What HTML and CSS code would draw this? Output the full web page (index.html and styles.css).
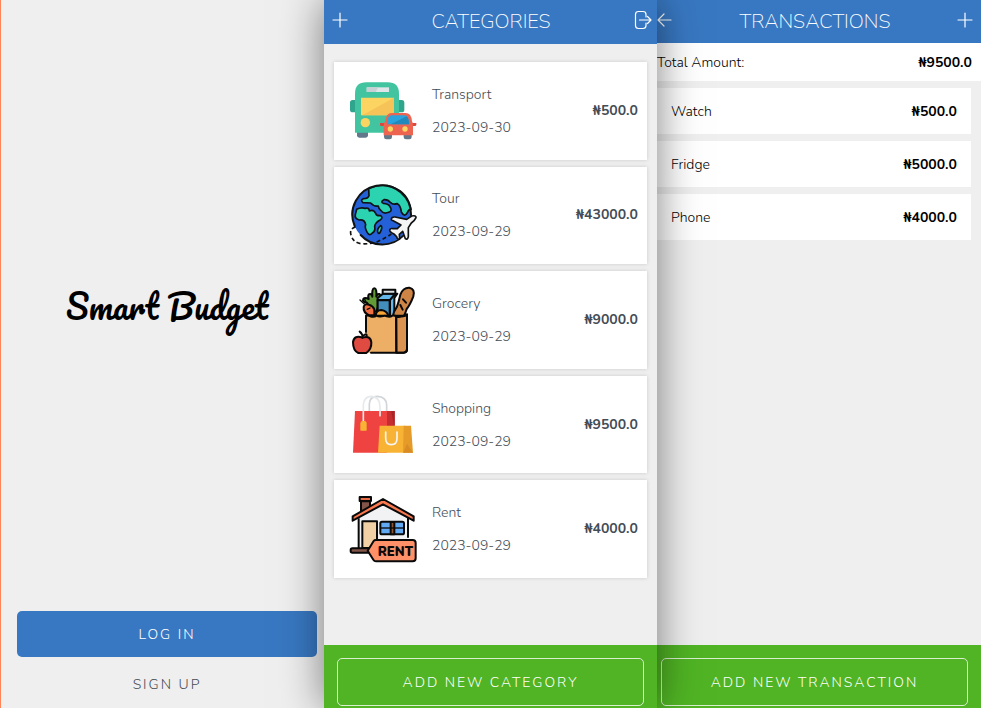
FILE: index.html
```html
<!DOCTYPE html>
<html lang="en">
<head>
<meta charset="utf-8">
<meta name="viewport" content="width=device-width, initial-scale=1">
<title>Smart Budget</title>
<link rel="stylesheet" href="styles.css">
</head>
<body>
<div class="screens">
  <section class="screen welcome">
    <h1 class="brand">Smart Budget</h1>
    <div class="actions">
      <button class="btn btn-login" type="button">LOG IN</button>
      <button class="btn btn-signup" type="button">SIGN UP</button>
    </div>
  </section>

  <section class="screen categories">
    <header class="bar">
      <button class="icon-btn" type="button" aria-label="Add category">
        <svg width="16" height="16" viewBox="0 0 16 16"><path d="M8 1v14M1 8h14"/></svg>
      </button>
      <h2 class="title">CATEGORIES</h2>
      <button class="icon-btn" type="button" aria-label="Log out">
        <svg width="18" height="20" viewBox="0 0 18 20"><path d="M12 7V4.500Q12 1.500 9 1.500H4.500Q1.500 1.500 1.500 4.500v11q0 3 3 3H9q3 0 3-3V13M5.500 10H17M13.500 6.500L17 10l-3.500 3.500"/></svg>
      </button>
    </header>
    <ul class="cards">
      <li class="card">
        <svg class="pic" viewBox="42 29 216 216">
          <path fill="#2fa58d" d="M61 104h-8q-8 0-8 8v21q0 8 8 8h8zM191 104h9q8 0 8 8v21q0 8-8 8h-9z"/>
          <path fill="#63798b" d="M66 198h33v12q0 7-7 7H73q-7 0-7-7z"/>
          <path fill="#42c4a0" d="M60 202V85q0-34 34-34h64q34 0 34 34v117z"/>
          <path fill="#dfe5e9" d="M95 66h67v14H95z"/><path fill="#c7d0d5" d="M95 66h35l-8 14H95z"/>
          <path fill="#fcd462" d="M78 97h99v53H78z"/><path fill="#f6c358" d="M177 97v53H82z"/>
          <circle cx="91" cy="172" r="14" fill="#fcd462"/>
          <path fill="#63798b" d="M147 207h24v8q0 7-7 7h-10q-7 0-7-7zM206 207h24v8q0 7-7 7h-10q-7 0-7-7z"/>
          <path fill="#d9493e" d="M135 173h14v9h-11q-3 0-3-4zM230 173h14v5q0 4-4 4h-10z"/>
          <path fill="#ed6450" d="M146 210v-30q0-7 5-12 2-25 19-25h42q17 0 19 25 3 4 3 12v30z"/>
          <path fill="#2ba4dd" d="M156 177q0-27 14-27h38q14 0 14 27z"/><path fill="#2289bd" d="M215 153q7 6 7 24h-55z"/>
          <circle cx="166" cy="191" r="8" fill="#fcd462"/><circle cx="210" cy="191" r="8" fill="#fcd462"/>
        </svg>
        <div class="info"><span>Transport</span><time datetime="2023-09-30">2023-09-30</time></div>
        <strong class="amount">₦500.0</strong>
      </li>
      <li class="card">
        <svg class="pic" viewBox="42 28 216 216" stroke-linejoin="round" stroke-linecap="round">
          <circle cx="140" cy="135" r="88" fill="#2461d8"/>
          <g fill="#2bd3b1" stroke="#101214" stroke-width="5">
            <path d="M101 57q38-17 70-6 48 17 57 68-7-1-11 10-8 16-18-2-2-20-12-25-14 4-20-3-8-10-20-9-12 7-2 11 16 1 20 10 9 12-4 17-16 6-23-5-8-7-8-14-14 2-23-9-10-1-23-1-9-8 1-12 14 0 17-9z"/>
            <path d="M65 119q12-7 26-3 12-3 12 8 13-6 19 7 1 8 15 7 9 6-3 14-13 7-15 18 3 14-7 20-9 10-15-1-9-15-5-24-3-16-19-14-15-4-12-16z"/>
            <path d="M128 186q-2-9 9-18 7 2-1 19-5 9-8-1z"/>
          </g>
          <path fill="none" stroke="#101214" stroke-width="6" d="M59 169A88 88 0 1 1 228 137M77 196A88 88 0 0 0 205 198"/>
          <path fill="none" stroke="#101214" stroke-width="5" stroke-dasharray="12 8" stroke-linecap="butt" d="M62 172q-17 4-15 19 4 27 31 31 27 2 49-6 25-11 42-23"/>
          <path fill="#f5f5f6" stroke="#101214" stroke-width="5" d="M164 181q2-6 10-4l13 0 11-11-29-16q0-9 11-8l35 7 15-10q14-3 13 5-3 8-14 16l-9 14 0 27q-3 11-9 6l-8-22-10 9 1 13q-7 4-9-6-7-9-15-12-6-3-6-8z"/>
        </svg>
        <div class="info"><span>Tour</span><time datetime="2023-09-29">2023-09-29</time></div>
        <strong class="amount">₦43000.0</strong>
      </li>
      <li class="card">
        <svg class="pic" viewBox="42 26 216 216" stroke="#090909" stroke-width="6" stroke-linejoin="round" stroke-linecap="round">
          <path fill="#639b37" d="M112 107L96 82q-16-3-11-11 5-6 16 0-4-15 4-15 6 0 7 8-2-25 6-25t6 25q2-9 9-8 6 3 1 17 12-5 13 2 0 8-14 10l-9 24z"/>
          <path fill="#65b6e9" d="M128 68l16-13h43l-9 13v55h-50z"/><path fill="#428ebd" d="M128 75h36v47h-36z"/>
          <path fill="#d7dce0" d="M143 43h38v12h-38z"/><path fill="none" d="M128 74h37l15-18M165 75v46"/>
          <path fill="#ef7042" d="M86 95q2-11 16-7 12 3 16 14v18h-15q-19-8-17-25z"/><path stroke-width="4" d="M88 86L75 74M94 83l-6-14M97 102l8-4"/>
          <path fill="#f8a536" d="M122 121q1-17 17-17 16 2 21 17z"/>
          <path fill="#ce8445" d="M174 121q2-13 12-27 5-14 10-36 8-22 27-21 18 4 12 26-10 26-20 38-4 13-8 20z"/>
          <path d="M204 72l9 10M196 89l7 14"/>
          <path fill="#edae66" d="M93 172v-50q9-3 13 1 11 4 18-2 8 4 16 2 11-3 16 0 9 3 16-2 6-2 12 4v107H94z" stroke="none"/>
          <path fill="#db9352" d="M183 122q18 5 33-5v105q0 10-10 10h-22z"/>
          <path fill="none" d="M93 170v-49q8-2 13 2 11 4 18-2 8 4 16 2 11-3 16 0 9 3 16-2 6-2 12 3 10 2 16-2 8 2 16-4M184 123v109M108 232h98q10 0 10-10V119"/>
          <path fill="#df4a41" d="M82 187q-24-9-28 13 0 26 16 33h24q16-12 15-32-3-22-27-14z"/><path fill="none" d="M82 187q1-12-8-18M82 184q14-14 13-1"/>
        </svg>
        <div class="info"><span>Grocery</span><time datetime="2023-09-29">2023-09-29</time></div>
        <strong class="amount">₦9000.0</strong>
      </li>
      <li class="card">
        <svg class="pic" viewBox="42 25 216 216">
          <path fill="none" stroke="#d1d5d9" stroke-width="5" d="M103 91V70q1-23 24-23 26 1 28 25v19"/>
          <path fill="#ee4340" d="M60 91h96v125H54z"/><path fill="#c62d2e" d="M156 91h23v50h-23z"/><path fill="#a92428" d="M168 91h11v50z"/>
          <path fill="none" stroke="#e7eaed" stroke-width="5" stroke-linecap="round" d="M85 120V73q2-26 25-26 25 3 25 31v27"/>
          <path fill="#f8b334" d="M80 121h11l4 5v22q0 2-2 2H78q-2 0-2-2v-21z"/>
          <path fill="#f8b334" d="M134 135h76v81h-81z"/><path fill="#e69b29" d="M206 135h22l6 81h-30z"/><path fill="#d98c24" d="M216 189l18 27h-29z"/>
          <path fill="none" stroke="#f5f5f6" stroke-width="5" stroke-linecap="round" d="M152 154v19q0 19 17 19t17-19v-19"/>
        </svg>
        <div class="info"><span>Shopping</span><time datetime="2023-09-29">2023-09-29</time></div>
        <strong class="amount">₦9500.0</strong>
      </li>
      <li class="card">
        <svg class="pic" viewBox="42 23 216 216" stroke="#090909" stroke-width="6" stroke-linejoin="round">
          <path fill="#f2f2f4" stroke="none" d="M71 97l74-45 73 44v95H71z"/>
          <path fill="#835548" d="M78 48h27v20L78 83z"/><path fill="#e86c47" d="M74 35h34v12H74z"/>
          <path fill="#f2d0a6" d="M82 188v-80h44v80z"/>
          <path fill="none" d="M71 99v89M219 97v60"/>
          <path fill="#fa7850" d="M53 93l91-52 92 52v13l-92-49-91 49z"/>
          <rect x="136" y="109" width="71" height="38" rx="5" fill="#62a9f4"/><path fill="#91542e" d="M167 110h11v37h-11z"/><path fill="none" d="M137 128h70" stroke-width="4"/>
          <rect x="47" y="189" width="58" height="13" rx="5" fill="#835548"/>
          <path fill="#ff9068" d="M98 196l18-29q2-3 7-3h110q9 0 9 9v46q0 9-9 9H123q-5 0-8-5z"/>
          <text x="128" y="211" class="sign" stroke="none">RENT</text>
        </svg>
        <div class="info"><span>Rent</span><time datetime="2023-09-29">2023-09-29</time></div>
        <strong class="amount">₦4000.0</strong>
      </li>
    </ul>
    <footer class="foot"><button class="btn btn-outline" type="button">ADD NEW CATEGORY</button></footer>
  </section>

  <section class="screen transactions">
    <header class="bar">
      <button class="icon-btn" type="button" aria-label="Back">
        <svg width="16" height="16" viewBox="0 0 16 16"><path d="M14 8H1M7 2L1 8l6 6"/></svg>
      </button>
      <h2 class="title">TRANSACTIONS</h2>
      <button class="icon-btn" type="button" aria-label="Add transaction">
        <svg width="16" height="16" viewBox="0 0 16 16"><path d="M8 1v14M1 8h14"/></svg>
      </button>
    </header>
    <div class="total"><span>Total Amount:</span><strong>₦9500.0</strong></div>
    <ul class="rows">
      <li class="row"><span>Watch</span><strong>₦500.0</strong></li>
      <li class="row"><span>Fridge</span><strong>₦5000.0</strong></li>
      <li class="row"><span>Phone</span><strong>₦4000.0</strong></li>
    </ul>
    <footer class="foot"><button class="btn btn-outline" type="button">ADD NEW TRANSACTION</button></footer>
  </section>
</div>
</body>
</html>
```
FILE: styles.css
```css
* {
  box-sizing: border-box;
}

body {
  margin: 0;
  background: #efefef;
  color: #000;
  font-family: Nunito, "Open Sans", sans-serif;
  font-size: 14px;
  font-weight: 300;
  line-height: 20px;
}

h1, h2, ul {
  margin: 0;
  padding: 0;
}

ul {
  list-style: none;
}

.screens {
  display: grid;
  grid-template-columns: 324fr 333fr 324fr;
  min-height: 100vh;
}

.screen {
  display: flex;
  flex-direction: column;
  min-width: 0;
  background: #efefef;
}

.welcome {
  border-left: 1px solid #ff8458;
  padding: 0 7px 0 16px;
}

.brand {
  flex: 1;
  display: flex;
  align-items: center;
  justify-content: center;
  color: #000;
  font-family: Pacifico, Lato, cursive;
  font-size: 33px;
  font-weight: 400;
  line-height: 48px;
}

.actions {
  display: flex;
  flex-direction: column;
  gap: 4px;
}

.btn {
  width: 100%;
  border: 0;
  border-radius: 5px;
  background: none;
  font-family: inherit;
  font-size: 14px;
  font-weight: 300;
  letter-spacing: 2px;
}

.btn-login {
  height: 46px;
  background: #3878c2;
  color: #fff;
}

.btn-signup {
  height: 47px;
  color: #444c55;
}

.categories {
  position: relative;
  z-index: 1;
  box-shadow: 0 0 40px rgba(0, 0, 0, 0.5);
}

.bar {
  display: flex;
  align-items: center;
  height: 44px;
  padding: 0 5px 4px 8px;
  background: #3878c2;
  color: #fff;
}

.transactions .bar {
  height: 43px;
  padding: 0 8px 4px 0;
}

.title {
  flex: 1;
  padding-top: 4px;
  font-size: 20px;
  font-weight: 200;
  line-height: 28px;
  text-align: center;
}

.icon-btn {
  display: flex;
  padding: 0;
  border: 0;
  background: none;
  color: inherit;
}

.icon-btn svg {
  fill: none;
  stroke: currentColor;
  stroke-width: 1.2;
  stroke-linecap: round;
  stroke-linejoin: round;
}

.cards {
  flex: 1;
  display: grid;
  grid-auto-rows: 1fr;
  gap: 7px;
  padding: 18px 10px 67px;
}

.card {
  display: flex;
  align-items: center;
  gap: 11px;
  padding: 0 9px 0 15px;
  background: #fff;
  box-shadow: 0 0 4px rgba(0, 0, 0, 0.16);
  color: #444c55;
}

.pic {
  flex: none;
  width: 72px;
  height: 72px;
}

.sign {
  fill: #090909;
  font-family: Nunito, sans-serif;
  font-size: 39px;
  font-weight: 900;
}

.info {
  flex: 1;
  display: flex;
  flex-direction: column;
  line-height: 33px;
}

strong {
  font-weight: 700;
}

.foot {
  margin-top: auto;
  padding: 13px 13px 2px;
  background: #50b424;
}

.transactions .foot {
  padding: 13px 13px 2px 4px;
}

.btn-outline {
  height: 48px;
  border: 1px solid #d9efcf;
  color: #fff;
}

.total {
  display: flex;
  justify-content: space-between;
  padding: 10px 9px 8px 0;
  background: #fff;
}

.rows {
  display: flex;
  flex-direction: column;
  gap: 7px;
  padding: 7px 10px 0 0;
}

.row {
  display: flex;
  justify-content: space-between;
  padding: 14px 14px 12px;
  background: #fff;
}
```
